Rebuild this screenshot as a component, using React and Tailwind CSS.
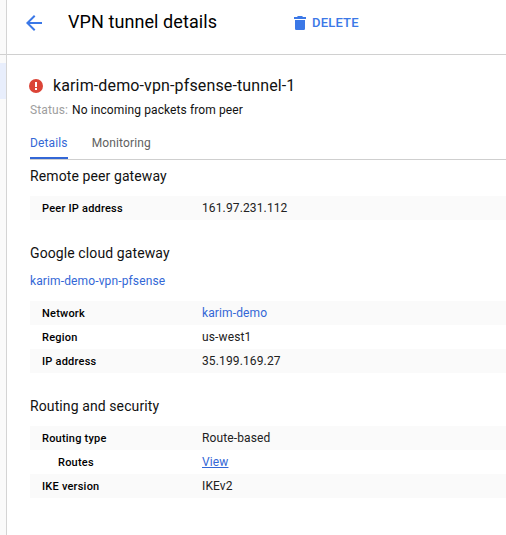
function Row({ label, children, shaded, indent }) {
  return (
    <div className={`flex h-6 items-center ${shaded ? 'bg-[#fafafa]' : ''}`}>
      <div className={`w-[172px] shrink-0 pt-0.5 text-[11px] leading-6 font-medium tracking-[0.22px] text-black ${indent ? 'pl-7' : 'pl-3'}`}>
        {label}
      </div>
      <div className="text-[12px] leading-6 tracking-[0.13px] text-[#212121]">{children}</div>
    </div>
  );
}

function Heading({ children }) {
  return <h2 className="h-5 text-[14px] leading-5 tracking-[0.1px] text-[#111]">{children}</h2>;
}

export default function App() {
  return (
    <div className="flex h-[535px] w-[506px] overflow-hidden bg-white font-['Roboto',sans-serif] whitespace-nowrap">
      <aside className="flex w-[7px] shrink-0 flex-col border-r border-[#d4d4d4] bg-[#fafafa]">
        <div className="h-[55px] shrink-0 border-b border-[#d0d0d0]" />
        <div className="mt-2 h-9 shrink-0 bg-[#e8eefc]" />
      </aside>
      <main className="min-w-0 flex-1">
        <header className="flex h-[55px] border-b border-[#d0d0d0]">
          <svg className="mt-[11px] ml-[15px] size-6 shrink-0" viewBox="0 0 24 24" fill="#3b78e7">
            <path d="M20 11H7.83l5.59-5.59L12 4l-8 8 8 8 1.41-1.41L7.83 13H20v-2z" />
          </svg>
          <h1 className="mt-[10px] ml-[22px] w-[225px] text-[18px] leading-6 tracking-[0.08px] text-black">VPN tunnel details</h1>
          <button className="mt-[11px] flex h-6 items-center text-[13px] font-medium tracking-[0.2px] text-[#3b78e7]">
            <svg className="mr-[6px] ml-px h-[14px] w-3" viewBox="0 0 12 14" fill="#3b78e7">
              <path d="M1 12.4C1 13.3 1.7 14 2.6 14h6.8c.9 0 1.6-.7 1.6-1.6V4H1v8.4zM12 1H9l-.9-1H3.9L3 1H0v2h12V1z" />
            </svg>
            DELETE
          </button>
        </header>
        <div className="pl-[23px]">
          <div className="flex h-12 items-end">
            <svg className="mb-[10px] -ml-px size-[14px] shrink-0" viewBox="0 0 14 14">
              <circle cx="7" cy="7" r="7" fill="#db4437" />
              <path d="M6 3h2v5H6zM6 9h2v2H6z" fill="#fff" />
            </svg>
            <div className="mb-[5px] ml-[10px] text-[16px] leading-6 tracking-[0.13px] text-[#111]">karim-demo-vpn-pfsense-tunnel-1</div>
          </div>
          <div className="flex h-[26px] gap-1 text-[12px] leading-[14px] tracking-[0.11px]">
            <span className="text-[#9e9e9e]">Status:</span>
            <span className="text-[#111]">No incoming packets from peer</span>
          </div>
          <nav className="flex h-[31px] gap-6 border-b border-[#cfcfcf] text-[12px] leading-[28px] tracking-[0.13px]">
            <span className="h-[30px] border-b-2 border-[#3367d6] text-[#3367d6]">Details</span>
            <span className="text-[#616161]">Monitoring</span>
          </nav>
          <section className="pt-[6px]">
            <Heading>Remote peer gateway</Heading>
            <div className="mt-[10px]">
              <Row label="Peer IP address" shaded>161.97.231.112</Row>
            </div>
          </section>
          <section className="pt-[23px]">
            <Heading>Google cloud gateway</Heading>
            <a className="mt-2 block text-[12px] leading-5 tracking-[0.13px] text-[#3367d6]">karim-demo-vpn-pfsense</a>
            <div className="mt-[10px]">
              <Row label="Network" shaded><a className="text-[#3367d6]">karim-demo</a></Row>
              <Row label="Region">us-west1</Row>
              <Row label="IP address" shaded>35.199.169.27</Row>
            </div>
          </section>
          <section className="pt-[23px]">
            <Heading>Routing and security</Heading>
            <div className="mt-[10px]">
              <Row label="Routing type" shaded>Route-based</Row>
              <Row label="Routes" indent><a className="text-[#3367d6] underline">View</a></Row>
              <Row label="IKE version" shaded>IKEv2</Row>
            </div>
          </section>
        </div>
      </main>
    </div>
  );
}
